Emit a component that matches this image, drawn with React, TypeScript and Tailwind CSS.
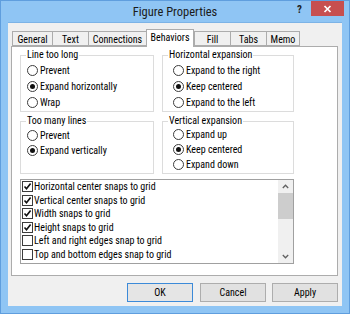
import React from "react";

function Radio({ label, checked, h = "h-4" }: { label: string; checked?: boolean; h?: string }) {
  return (
    <div className={`flex items-center gap-[2px] ${h}`}>
      <span className="flex h-[11px] w-[11px] shrink-0 items-center justify-center rounded-full border border-[#3c3c3c] bg-white">
        {checked && <span className="h-[5px] w-[5px] rounded-full bg-[#111]" />}
      </span>
      <span className="whitespace-nowrap">{label}</span>
    </div>
  );
}

function Check({ label, checked }: { label: string; checked?: boolean }) {
  return (
    <div className="flex h-[13.5px] items-center gap-[1px] pl-px">
      <span className="flex h-[11px] w-[11px] shrink-0 items-center justify-center border border-[#3c3c3c] bg-white">
        {checked && (
          <svg width="9" height="9" viewBox="0 0 9 9">
            <path d="M1.5 4.5 L3.5 6.8 L7.6 1.6" fill="none" stroke="#111" strokeWidth="1.6" />
          </svg>
        )}
      </span>
      <span className="whitespace-nowrap">{label}</span>
    </div>
  );
}

function Group({
  title,
  className,
  legendClass,
  children,
}: {
  title: string;
  className: string;
  legendClass: string;
  children: React.ReactNode;
}) {
  return (
    <fieldset className={`border border-[#dcdcdc] ${className}`}>
      <legend className={`h-3 px-px leading-3 ${legendClass}`}>{title}</legend>
      {children}
    </fieldset>
  );
}

const tabs = [
  { name: "General", w: "w-[40px]" },
  { name: "Text", w: "w-[36px]" },
  { name: "Connections", w: "w-[58px]" },
  { name: "Behaviors", w: "w-[48px]", active: true },
  { name: "Fill", w: "w-[36px]" },
  { name: "Tabs", w: "w-[36px]" },
  { name: "Memo", w: "w-[34px]" },
];

const checks = [
  { label: "Horizontal center snaps to grid", checked: true },
  { label: "Vertical center snaps to grid", checked: true },
  { label: "Width snaps to grid", checked: true },
  { label: "Height snaps to grid", checked: true },
  { label: "Left and right edges snap to grid" },
  { label: "Top and bottom edges snap to grid" },
];

export default function App() {
  return (
    <div className="flex h-[314px] w-[350px] flex-col border border-[#5f9ede] bg-[#8fc5f4] font-['Roboto_Condensed','Roboto',sans-serif] text-[10px] text-black">
      {/* title bar */}
      <div className="grid h-[21px] grid-cols-[1fr_auto_1fr]">
        <div />
        <div className="pt-[3px] text-[12.5px] leading-[16px] text-[#1b1b1b]">Figure Properties</div>
        <div className="flex justify-end">
          <span className="mr-[9px] pt-[2px] text-[11px] font-bold leading-[14px] text-[#222]">?</span>
          <div className="mr-[5px] flex h-[15px] w-[33px] items-center justify-center bg-[#c74f4f]">
            <svg width="9" height="8" viewBox="0 0 9 8">
              <path d="M1.5 1 L7.5 7 M7.5 1 L1.5 7" stroke="#fff" strokeWidth="1.7" />
            </svg>
          </div>
        </div>
      </div>

      {/* client */}
      <div className="mx-[7px] mb-[7px] flex flex-1 flex-col border-t border-[#7cb3e6] bg-[#f0f0f0] pl-[3px] pr-[4px] pt-[6px]">
        {/* tabs */}
        <div className="flex h-[17px] items-end pl-px">
          {tabs.map((t) =>
            t.active ? (
              <div
                key={t.name}
                className={`relative z-10 -mb-px flex h-[18px] items-center justify-center border border-b-0 border-[#acacac] bg-white pb-[2px] ${t.w}`}
              >
                {t.name}
              </div>
            ) : (
              <div
                key={t.name}
                className={`flex h-[15px] items-center justify-center border border-r-0 border-[#acacac] bg-[#f0f0f0] pt-px last:border-r ${t.w}`}
              >
                {t.name}
              </div>
            )
          )}
        </div>

        {/* panel */}
        <div className="h-[230px] border border-[#acacac] bg-white pl-[8px] pt-[2px]">
          <div className="flex gap-[8px]">
            <Group title="Line too long" className="h-[63px] w-[134px] pl-[6px]" legendClass="-ml-px">
              <div className="pt-px">
                <Radio label="Prevent" />
                <Radio label="Expand horizontally" checked />
                <Radio label="Wrap" />
              </div>
            </Group>
            <Group title="Horizontal expansion" className="h-[63px] w-[132px] pl-[10px]" legendClass="-ml-[5px]">
              <div className="pt-px">
                <Radio label="Expand to the right" />
                <Radio label="Keep centered" checked />
                <Radio label="Expand to the left" />
              </div>
            </Group>
          </div>
          <div className="mt-[3px] flex gap-[8px]">
            <Group title="Too many lines" className="h-[59px] w-[134px] pl-[6px]" legendClass="-ml-px">
              <div className="pt-px">
                <Radio label="Prevent" h="h-[15px]" />
                <Radio label="Expand vertically" checked h="h-[15px]" />
              </div>
            </Group>
            <Group title="Vertical expansion" className="h-[59px] w-[132px] pl-[10px]" legendClass="-ml-[5px]">
              <div>
                <Radio label="Expand up" h="h-[15px]" />
                <Radio label="Keep centered" checked h="h-[15px]" />
                <Radio label="Expand down" h="h-[15px]" />
              </div>
            </Group>
          </div>

          {/* list box */}
          <div className="mt-[5px] flex h-[85px] w-[274px] border border-[#a0a0a0]">
            <div className="flex-1 bg-white">
              {checks.map((c) => (
                <Check key={c.label} label={c.label} checked={c.checked} />
              ))}
            </div>
            <div className="flex w-[15px] flex-col bg-[#f0f0f0]">
              <div className="flex h-[13px] items-center justify-center">
                <svg width="7" height="5" viewBox="0 0 7 5">
                  <path d="M0.8 4 L3.5 1.2 L6.2 4" fill="none" stroke="#606060" strokeWidth="1.3" />
                </svg>
              </div>
              <div className="h-[26px] bg-[#cdcdcd]" />
              <div className="flex-1" />
              <div className="flex h-[13px] items-center justify-center">
                <svg width="7" height="5" viewBox="0 0 7 5">
                  <path d="M0.8 1 L3.5 3.8 L6.2 1" fill="none" stroke="#606060" strokeWidth="1.3" />
                </svg>
              </div>
            </div>
          </div>
        </div>

        {/* buttons */}
        <div className="mt-[7px] flex justify-end gap-[7px]">
          <button className="h-[19px] w-[66px] border border-[#3c8ad8] bg-[#e5e5e5] leading-none">OK</button>
          <button className="h-[19px] w-[66px] border border-[#adadad] bg-[#e1e1e1] leading-none">Cancel</button>
          <button className="-ml-px h-[19px] w-[66px] border border-[#adadad] bg-[#e1e1e1] leading-none">Apply</button>
        </div>
      </div>
    </div>
  );
}
